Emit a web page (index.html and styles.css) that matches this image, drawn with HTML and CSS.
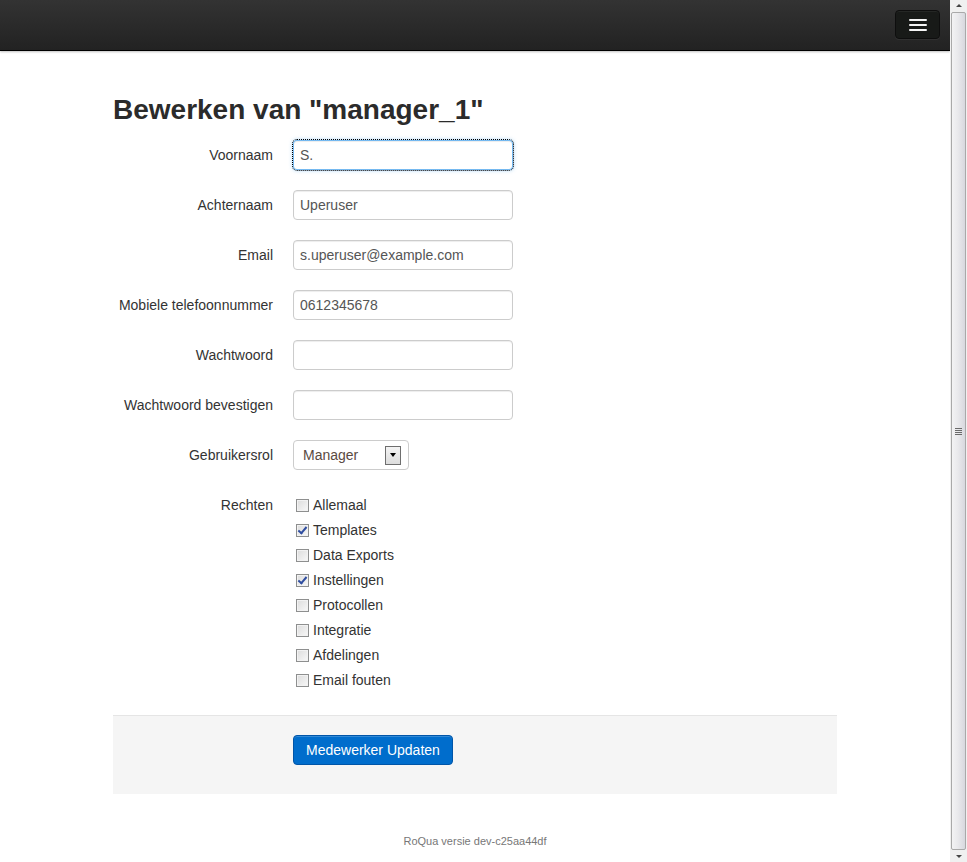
FILE: index.html
```html
<!DOCTYPE html>
<html lang="nl">
  <head>
    <meta charset="UTF-8">
    <title>Bewerken van "manager_1"</title>
    <link rel="stylesheet" href="styles.css">
  </head>
  <body>
    <div class="window">
      <div class="page">
        <!-- Top navbar -->
        <div class="navbar">
          <button class="btn-navbar" type="button">
            <span class="icon-bar"></span>
            <span class="icon-bar"></span>
            <span class="icon-bar"></span>
          </button>
        </div>

        <div class="container">
          <h1>Bewerken van "manager_1"</h1>

          <form class="form-horizontal">
            <div class="control-group">
              <label class="control-label">Voornaam</label>
              <div class="controls"><input type="text" class="focused" value="S."></div>
            </div>
            <div class="control-group">
              <label class="control-label">Achternaam</label>
              <div class="controls"><input type="text" value="Uperuser"></div>
            </div>
            <div class="control-group">
              <label class="control-label">Email</label>
              <div class="controls"><input type="text" value="s.uperuser@example.com"></div>
            </div>
            <div class="control-group">
              <label class="control-label">Mobiele telefoonnummer</label>
              <div class="controls"><input type="text" value="0612345678"></div>
            </div>
            <div class="control-group">
              <label class="control-label">Wachtwoord</label>
              <div class="controls"><input type="password" value=""></div>
            </div>
            <div class="control-group">
              <label class="control-label">Wachtwoord bevestigen</label>
              <div class="controls"><input type="password" value=""></div>
            </div>
            <div class="control-group">
              <label class="control-label">Gebruikersrol</label>
              <div class="controls">
                <div class="select">
                  <span class="select-value">Manager</span>
                  <span class="select-arrow"><span class="caret"></span></span>
                </div>
              </div>
            </div>
            <div class="control-group">
              <label class="control-label rights-label">Rechten</label>
              <div class="controls checks">
                <label class="checkbox"><span class="box"></span>Allemaal</label>
                <label class="checkbox"><span class="box checked"></span>Templates</label>
                <label class="checkbox"><span class="box"></span>Data Exports</label>
                <label class="checkbox"><span class="box checked"></span>Instellingen</label>
                <label class="checkbox"><span class="box"></span>Protocollen</label>
                <label class="checkbox"><span class="box"></span>Integratie</label>
                <label class="checkbox"><span class="box"></span>Afdelingen</label>
                <label class="checkbox"><span class="box"></span>Email fouten</label>
              </div>
            </div>

            <div class="form-actions">
              <button type="button" class="btn-primary">Medewerker Updaten</button>
            </div>
          </form>

          <div class="footer">RoQua versie dev-c25aa44df</div>
        </div>
      </div>

      <!-- Fake browser scrollbar -->
      <div class="scrollbar">
        <div class="scroll-btn up"></div>
        <div class="scroll-thumb"><span class="grip"></span></div>
        <div class="scroll-btn down"></div>
      </div>
    </div>
  </body>
</html>
```

FILE: styles.css
```css
html, body {
  margin: 0;
  height: 100%;
  overflow: hidden;
}

body {
  font-family: "Liberation Sans", Arial, sans-serif;
  font-size: 14px;
  line-height: 20px;
  color: #333;
  background: #fff;
}

.window {
  display: flex;
  height: 862px;
}

.page {
  flex: 1;
  min-width: 0;
}

/* navbar */
.navbar {
  height: 50px;
  background: linear-gradient(#333333, #222222);
  border-bottom: 1px solid #000;
  box-shadow: 0 1px 2px rgba(0, 0, 0, 0.25);
  display: flex;
  justify-content: flex-end;
  align-items: flex-start;
  padding-right: 10px;
}

.btn-navbar {
  margin-top: 10px;
  width: 45px;
  height: 29px;
  background: #181a18;
  border: 1px solid #0e0e0e;
  border-radius: 4px;
  box-shadow: inset 0 1px 0 rgba(255, 255, 255, 0.06), 0 1px 0 rgba(255, 255, 255, 0.05);
  display: flex;
  flex-direction: column;
  align-items: center;
  justify-content: center;
  gap: 3px;
  padding: 0;
}

.icon-bar {
  display: block;
  width: 18px;
  height: 2px;
  background: #f5f5f5;
  border-radius: 1px;
}

/* content */
.container {
  width: 724px;
  margin: 0 auto;
}

h1 {
  font-size: 28px;
  line-height: 40px;
  font-weight: bold;
  margin: 39px 0 10px;
  color: #2b2b2b;
}

.control-group {
  display: flex;
  margin-bottom: 20px;
}

.control-label {
  width: 160px;
  text-align: right;
  padding-top: 5px;
  flex-shrink: 0;
}

.controls {
  margin-left: 20px;
}

input[type=text], input[type=password] {
  box-sizing: border-box;
  width: 220px;
  height: 30px;
  padding: 4px 6px;
  font-family: inherit;
  font-size: 14px;
  color: #555;
  border: 1px solid #ccc;
  border-radius: 4px;
  box-shadow: inset 0 1px 1px rgba(0, 0, 0, 0.075);
  display: block;
}

input.focused {
  border-color: rgba(82, 168, 236, 0.8);
  box-shadow: inset 0 1px 1px rgba(0, 0, 0, 0.075), 0 0 4px rgba(82, 168, 236, 0.6);
  outline: 1px dotted #000;
  outline-offset: 0;
}

.select {
  box-sizing: border-box;
  width: 116px;
  height: 30px;
  border: 1px solid #ccc;
  border-radius: 4px;
  display: flex;
  align-items: center;
  justify-content: space-between;
  padding: 0 7px 0 9px;
  color: #5a4a42;
}

.select-arrow {
  box-sizing: border-box;
  width: 16px;
  height: 19px;
  border: 1px solid #6e6e6e;
  background: linear-gradient(#f4f4f4, #dcdcdc);
  display: flex;
  align-items: center;
  justify-content: center;
}

.caret {
  width: 0;
  height: 0;
  border-left: 3px solid transparent;
  border-right: 3px solid transparent;
  border-top: 4px solid #000;
}

.rights-label {
  padding-top: 5px;
}

.checks {
  padding-top: 8px;
}

.checkbox {
  display: flex;
  align-items: center;
  height: 25px;
  line-height: 25px;
  margin-top: -5px;
  margin-bottom: 5px;
}

.checkbox:last-child {
  margin-bottom: 0;
}

.box {
  box-sizing: border-box;
  width: 13px;
  height: 13px;
  margin: 0 4px 0 3px;
  border: 1px solid #8e8f8f;
  background: linear-gradient(135deg, #dcdcdc, #f8f8f8);
  box-shadow: inset 0 0 0 1px #f2f2f2;
  position: relative;
}

.box.checked::after {
  content: "";
  position: absolute;
  left: 3px;
  top: 0px;
  width: 3px;
  height: 7px;
  border-right: 2px solid #2f4da0;
  border-bottom: 2px solid #2f4da0;
  transform: rotate(40deg);
}

.form-actions {
  margin-top: 22px;
  padding: 19px 20px 29px 180px;
  background: #f5f5f5;
  border-top: 1px solid #e5e5e5;
  height: 30px;
}

.btn-primary {
  box-sizing: border-box;
  height: 30px;
  padding: 4px 12px;
  font-family: inherit;
  font-size: 14px;
  color: #fff;
  background: #006dcc;
  border: 1px solid #0055a8;
  border-radius: 4px;
  box-shadow: inset 0 1px 0 rgba(255, 255, 255, 0.2);
}

.footer {
  text-align: center;
  font-size: 11px;
  color: #777;
  margin-top: 37px;
}

/* scrollbar */
.scrollbar {
  width: 17px;
  flex-shrink: 0;
  display: flex;
  flex-direction: column;
  background: #f0f0f0;
}

.scroll-btn {
  height: 11px;
  display: flex;
  justify-content: center;
  align-items: center;
}

.scroll-btn.up::before {
  content: "";
  border-left: 3px solid transparent;
  border-right: 3px solid transparent;
  border-bottom: 3px solid #444;
}

.scroll-btn.down::before {
  content: "";
  border-left: 3px solid transparent;
  border-right: 3px solid transparent;
  border-top: 3px solid #444;
}

.scroll-thumb {
  flex: 1;
  margin: 1px 1px;
  border: 1px solid #a9a9a9;
  border-radius: 2px;
  background: linear-gradient(90deg, #f3f3f4, #e9e9ec 45%, #d8d8de);
  display: flex;
  justify-content: center;
  align-items: center;
}

.grip {
  width: 7px;
  height: 7px;
  background: repeating-linear-gradient(#6a6a6a 0 1px, transparent 1px 2px);
}
```
